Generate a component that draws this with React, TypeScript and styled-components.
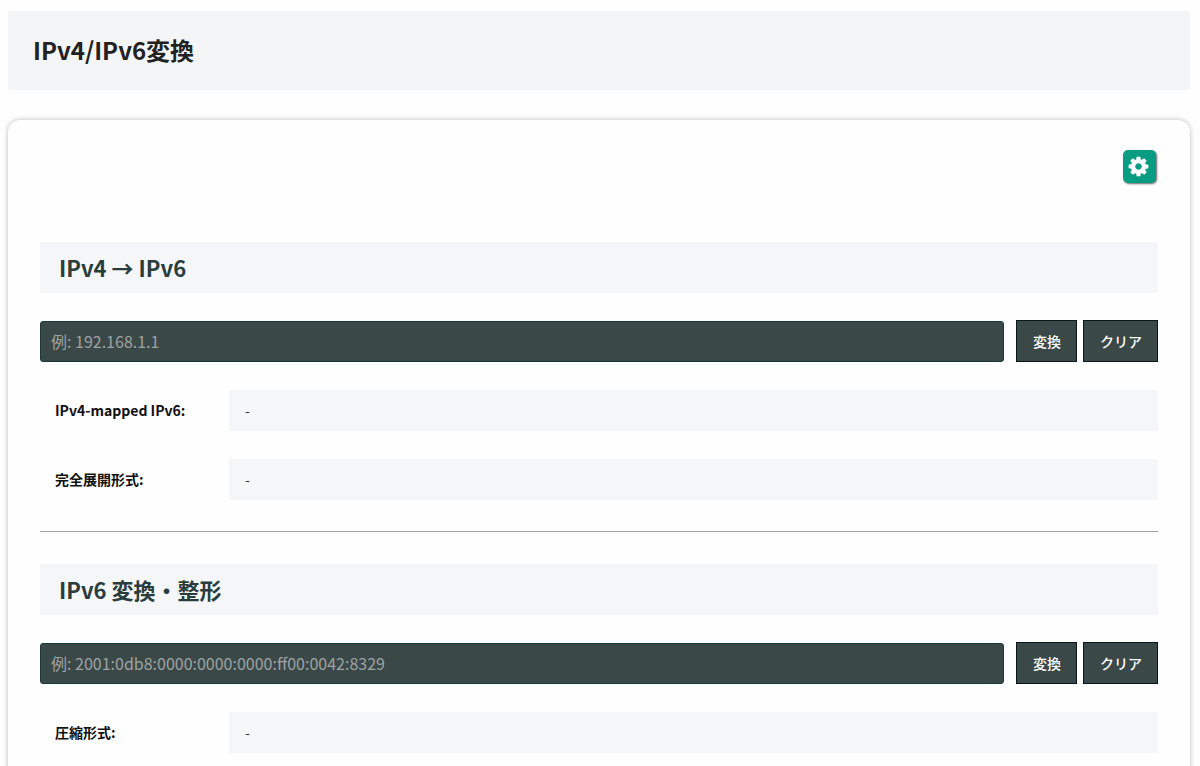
import React, { useId } from "react";
import styled, { createGlobalStyle } from "styled-components";

const GlobalStyle = createGlobalStyle`
  *, *::before, *::after { box-sizing: border-box; }
  body {
    margin: 0;
    background: #fefefe;
    color: #111;
    font-family: "Noto Sans CJK JP", "Noto Sans", sans-serif;
  }
  button, input { font-family: inherit; }
`;

const Page = styled.div`
  padding: 11px 10px 32px 8px;
`;

const PageHeader = styled.header`
  padding: 19px 25px 21px;
  background: #f4f5f7;
  border-radius: 2px;
`;

const PageTitle = styled.h1`
  margin: 0;
  font-size: 24px;
  line-height: 39px;
  font-weight: 700;
  color: #222;
`;

const Card = styled.main`
  margin-top: 30px;
  padding: 30px 32px 32px;
  border-radius: 12px;
  background: #fefefe;
  box-shadow: 0 0 5px rgba(0, 0, 0, 0.28);
`;

const Toolbar = styled.div`
  display: flex;
  justify-content: flex-end;
  padding: 0 2px 59px 0;
`;

const SettingsButton = styled.button`
  display: flex;
  align-items: center;
  justify-content: center;
  width: 33px;
  height: 33px;
  padding: 0 2px 0 0;
  border: 0;
  border-radius: 5px;
  background: #089d82;
  color: #fff;
  box-shadow: 1px 1px 2px rgba(0, 0, 0, 0.6);
`;

const SectionTitle = styled.h2`
  margin: 0 0 27px;
  padding: 9px 19px 10px;
  background: #f5f6f8;
  font-size: 22px;
  line-height: 32px;
  font-weight: 700;
  color: #2a3d3d;
`;

const Form = styled.form`
  display: flex;
  align-items: center;
  gap: 6px;
`;

const AddressInput = styled.input`
  flex: 1;
  min-width: 0;
  height: 41px;
  margin-right: 6px;
  padding: 0 10px;
  border: 1px solid #17393a;
  border-radius: 3px;
  background: #3a4848;
  color: #fff;
  font-size: 16px;
  &::placeholder { color: #9da2a3; opacity: 1; }
`;

const ActionButton = styled.button`
  height: 42px;
  padding: 0 15px 0 16px;
  border: 1px solid #061718;
  background: #3a4848;
  color: #fff;
  font-size: 14px;
  font-weight: 500;
`;

const Results = styled.dl`
  display: grid;
  gap: 28px;
  margin: 28px 0 0;
`;

const ResultRow = styled.div`
  display: grid;
  grid-template-columns: 189px 1fr;
  font-size: 14px;
  line-height: 41px;
`;

const ResultLabel = styled.dt`
  padding-left: 15px;
  font-weight: 700;
  color: #111;
`;

const ResultValue = styled.dd`
  margin: 0;
  padding: 0 16px;
  background: #f5f6f8;
  color: #333;
`;

const Divider = styled.hr`
  height: 1px;
  margin: 31px 0 32px;
  border: 0;
  background: #a0a2a2;
`;

function GearIcon() {
  return (
    <svg width="23" height="23" viewBox="0 0 1792 1792" fill="currentColor" aria-hidden="true">
      <path transform="translate(128 0)" d="M1024 896q0-106-75-181t-181-75-181 75-75 181 75 181 181 75 181-75 75-181zm512-109v222q0 12-8 23t-20 13l-185 28q-19 54-39 91 35 50 107 138 10 12 10 25t-9 23q-27 37-99 108t-94 71q-12 0-26-9l-138-108q-44 23-91 38-16 136-29 186-7 28-36 28h-222q-14 0-24.500-8.500t-11.500-21.500l-28-184q-49-16-90-37l-141 107q-10 9-25 9-14 0-25-11-126-114-165-168-7-10-7-23 0-12 8-23 15-21 51-66.500t54-70.500q-27-50-41-99l-183-27q-13-2-21-12.500t-8-23.500v-222q0-12 8-23t19-13l186-28q14-46 39-92-40-57-107-138-10-12-10-24 0-10 9-23 26-36 98.500-107.500t94.500-71.500q13 0 26 10l138 107q44-23 91-38 16-136 29-186 7-28 36-28h222q14 0 24.500 8.500t11.500 21.500l28 184q49 16 90 37l142-107q9-9 24-9 13 0 25 10 129 119 165 170 7 8 7 22 0 12-8 23-15 21-51 66.500t-54 70.500q26 50 41 98l183 28q13 2 21 12.500t8 23.500z" />
    </svg>
  );
}

interface ConverterProps {
  title: string;
  placeholder: string;
  results: string[];
}

function Converter({ title, placeholder, results }: ConverterProps) {
  const id = useId();
  return (
    <section aria-labelledby={id}>
      <SectionTitle id={id}>{title}</SectionTitle>
      <Form onSubmit={(e) => e.preventDefault()}>
        <AddressInput type="text" aria-labelledby={id} placeholder={placeholder} />
        <ActionButton type="submit">変換</ActionButton>
        <ActionButton type="reset">クリア</ActionButton>
      </Form>
      <Results>
        {results.map((label) => (
          <ResultRow key={label}>
            <ResultLabel>{label}</ResultLabel>
            <ResultValue>-</ResultValue>
          </ResultRow>
        ))}
      </Results>
    </section>
  );
}

export default function App() {
  return (
    <Page lang="ja">
      <GlobalStyle />
      <PageHeader>
        <PageTitle>IPv4/IPv6変換</PageTitle>
      </PageHeader>
      <Card>
        <Toolbar>
          <SettingsButton type="button" aria-label="設定">
            <GearIcon />
          </SettingsButton>
        </Toolbar>
        <Converter
          title="IPv4 → IPv6"
          placeholder="例: 192.168.1.1"
          results={["IPv4-mapped IPv6:", "完全展開形式:"]}
        />
        <Divider />
        <Converter
          title="IPv6 変換・整形"
          placeholder="例: 2001:0db8:0000:0000:0000:ff00:0042:8329"
          results={["圧縮形式:"]}
        />
      </Card>
    </Page>
  );
}
